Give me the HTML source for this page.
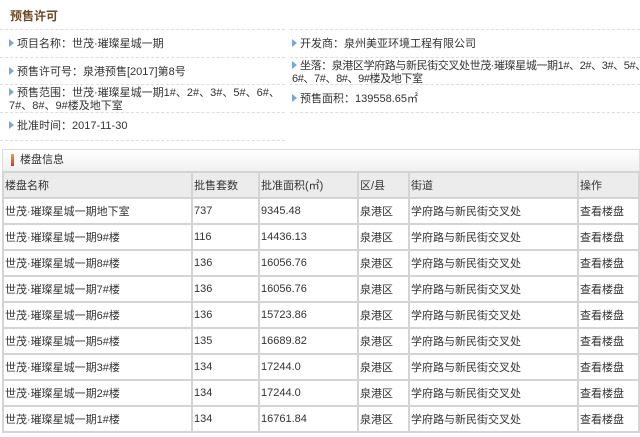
<!DOCTYPE html><html><head><meta charset="utf-8"><style>
*{margin:0;padding:0;box-sizing:border-box}
body{width:640px;height:437px;background:#fff;font-family:"Liberation Sans","Noto Sans CJK SC","WenQuanYi Zen Hei",sans-serif;font-size:11px;color:#333;position:relative;overflow:hidden}
.a{position:absolute;white-space:nowrap;line-height:13px}
.h{position:absolute;height:0;border-top:1px dashed #ddd}
.tri{display:inline-block;width:0;height:0;border-left:5px solid #7aa6d6;border-top:4px solid transparent;border-bottom:4px solid transparent;margin-right:3px;vertical-align:0}
table{position:absolute;left:2px;top:171px;width:638px;border-collapse:collapse}
td{border:2px solid #d4d4d4;height:26px;padding:0 0 0 1px;font-size:11px;color:#333;white-space:nowrap}
tr.hd td{background:#ececec}
</style></head><body>
<div class="a" style="left:10px;top:10px;font-size:12px;font-weight:bold;color:#6b4a2a">预售许可</div>
<div class="h" style="left:0;width:285px;top:29px"></div><div class="h" style="left:290px;width:350px;top:29px"></div>
<div class="a" style="left:9px;top:38px"><span class="tri"></span>项目名称：世茂·璀璨星城一期</div>
<div class="a" style="left:292px;top:38px"><span class="tri"></span>开发商：泉州美亚环境工程有限公司</div>
<div class="h" style="left:0;width:285px;top:57px"></div><div class="h" style="left:290px;width:350px;top:57px"></div>
<div class="a" style="left:9px;top:66px"><span class="tri"></span>预售许可号：泉港预售[2017]第8号</div>
<div class="a" style="left:292px;top:60px;letter-spacing:-0.4px"><span class="tri"></span>坐落：泉港区学府路与新民街交叉处世茂·璀璨星城一期1#、2#、3#、5#、<br>6#、7#、8#、9#楼及地下室</div>
<div class="h" style="left:0;width:285px;top:84px"></div><div class="h" style="left:290px;width:350px;top:84px"></div>
<div class="a" style="left:9px;top:87px"><span class="tri"></span>预售范围：世茂·璀璨星城一期1#、2#、3#、5#、6#、<br>7#、8#、9#楼及地下室</div>
<div class="a" style="left:292px;top:93px"><span class="tri"></span>预售面积：139558.65㎡</div>
<div class="h" style="left:0;width:285px;top:112px"></div><div class="h" style="left:290px;width:350px;top:112px"></div>
<div class="a" style="left:9px;top:120px"><span class="tri"></span>批准时间：2017-11-30</div>
<div class="h" style="left:0;width:285px;top:140px"></div>
<div style="position:absolute;left:2px;top:149px;width:638px;height:23px;border:1px solid #ddd;border-bottom:none;background:linear-gradient(#fff,#f0f0f0)"></div>
<div style="position:absolute;left:11px;top:154px;width:3px;height:12px;background:linear-gradient(#f2a32a,#d8331f)"></div>
<div class="a" style="left:20px;top:154px">楼盘信息</div>
<table>
<colgroup><col style="width:189px"><col style="width:67px"><col style="width:99px"><col style="width:51px"><col style="width:169px"><col></colgroup>
<tr class="hd"><td>楼盘名称</td><td>批售套数</td><td>批准面积(㎡)</td><td>区/县</td><td>街道</td><td>操作</td></tr>
<tr><td>世茂·璀璨星城一期地下室</td><td>737</td><td>9345.48</td><td>泉港区</td><td>学府路与新民街交叉处</td><td>查看楼盘</td></tr>
<tr><td>世茂·璀璨星城一期9#楼</td><td>116</td><td>14436.13</td><td>泉港区</td><td>学府路与新民街交叉处</td><td>查看楼盘</td></tr>
<tr><td>世茂·璀璨星城一期8#楼</td><td>136</td><td>16056.76</td><td>泉港区</td><td>学府路与新民街交叉处</td><td>查看楼盘</td></tr>
<tr><td>世茂·璀璨星城一期7#楼</td><td>136</td><td>16056.76</td><td>泉港区</td><td>学府路与新民街交叉处</td><td>查看楼盘</td></tr>
<tr><td>世茂·璀璨星城一期6#楼</td><td>136</td><td>15723.86</td><td>泉港区</td><td>学府路与新民街交叉处</td><td>查看楼盘</td></tr>
<tr><td>世茂·璀璨星城一期5#楼</td><td>135</td><td>16689.82</td><td>泉港区</td><td>学府路与新民街交叉处</td><td>查看楼盘</td></tr>
<tr><td>世茂·璀璨星城一期3#楼</td><td>134</td><td>17244.0</td><td>泉港区</td><td>学府路与新民街交叉处</td><td>查看楼盘</td></tr>
<tr><td>世茂·璀璨星城一期2#楼</td><td>134</td><td>17244.0</td><td>泉港区</td><td>学府路与新民街交叉处</td><td>查看楼盘</td></tr>
<tr><td>世茂·璀璨星城一期1#楼</td><td>134</td><td>16761.84</td><td>泉港区</td><td>学府路与新民街交叉处</td><td>查看楼盘</td></tr>
</table>
</body></html>
